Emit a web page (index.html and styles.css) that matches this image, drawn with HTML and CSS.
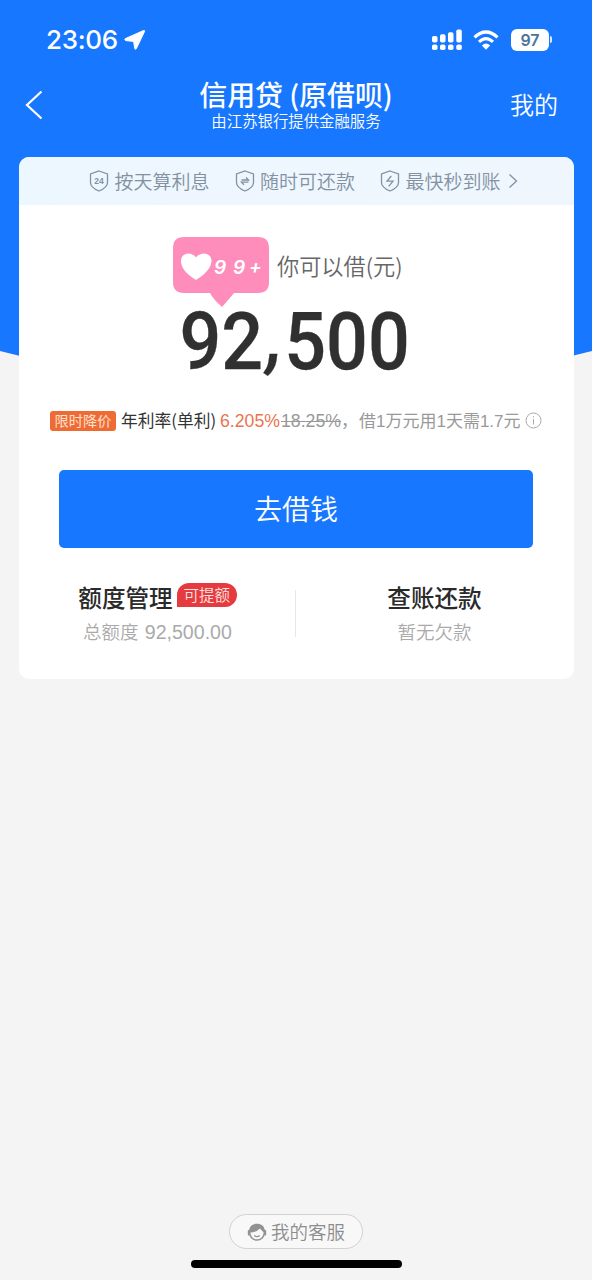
FILE: index.html
```html
<!DOCTYPE html>
<html lang="zh-CN">
<head>
<meta charset="utf-8">
<title>信用贷</title>
<link rel="stylesheet" href="styles.css">
</head>
<body>
<div class="page">
  <svg class="backdrop" width="592" height="380" viewBox="0 0 592 380"><path d="M0 0H592V351Q296 429 0 351Z" fill="#1777ff"/></svg>
  <header class="status">
    <span class="clock">23:06</span>
    <svg class="locate" width="22" height="22" viewBox="0 0 22 22"><path d="M19.600 1.500 1.200 9.700Q.2 11 1.700 11.600L9.600 12.400 10.800 19.700Q11.400 21 12.300 19.700L20.600 2.300Q20.700 1.100 19.600 1.500Z" fill="#fff" stroke="#fff"/></svg>
    <svg class="signal" width="32" height="24" viewBox="0 0 32 24" fill="#fff"><rect x="1" y="8" width="5.500" height="6.500" rx="1.800"/><rect x="9" y="6.300" width="5.500" height="8.200" rx="1.800"/><rect x="17" y="4.200" width="5.500" height="10.300" rx="1.800"/><rect x="25.300" y="1.500" width="5.500" height="13" rx="1.800"/><rect x="1" y="16.500" width="5.500" height="5.500" rx="1.800"/><rect x="9" y="16.500" width="5.500" height="5.500" rx="1.800"/><rect x="17" y="16.500" width="5.500" height="5.500" rx="1.800"/><rect x="25.300" y="16.500" width="5.500" height="5.500" rx="1.800"/></svg>
    <svg class="wifi" width="26" height="20" viewBox="0 0 26 20" fill="none" stroke="#fff" stroke-width="3.2"><path d="M1.500 7.300Q13-3.400 24.500 7.300"/><path d="M6 11.900Q13 5.300 20 11.900"/><path d="M8.900 15.400Q13 11.800 17.100 15.400L13 19.700Z" fill="#fff" stroke="none"/></svg>
    <span class="battery">97</span><span class="battery-tip"></span>
  </header>
  <nav class="nav">
    <svg class="back" width="20" height="30" viewBox="0 0 20 30"><path d="M17.500 1.500 3 15 17.500 28.500" fill="none" stroke="#fff" stroke-width="2.200"/></svg>
    <div class="heading"><h1 class="title">信用贷 (原借呗)</h1><p class="subtitle">由江苏银行提供金融服务</p></div>
    <a class="mine">我的</a>
  </nav>
  <main class="card">
    <div class="features">
      <span class="feature"><svg class="shield" width="20" height="22" viewBox="0 0 20 22"><path d="M10 1 18.500 4V12.500Q18.500 17.500 10 21Q1.500 17.500 1.500 12.500V4Z"/><text x="10" y="14" text-anchor="middle" class="shield-text">24</text></svg>按天算利息</span>
      <span class="feature"><svg class="shield" width="20" height="22" viewBox="0 0 20 22"><path d="M10 1 18.500 4V12.500Q18.500 17.500 10 21Q1.500 17.500 1.500 12.500V4Z"/><path d="M6.500 10H13.500L11 7.500M13.500 12.200H6.500L9 14.700"/></svg>随时可还款</span>
      <span class="feature"><svg class="shield" width="20" height="22" viewBox="0 0 20 22"><path d="M10 1 18.500 4V12.500Q18.500 17.500 10 21Q1.500 17.500 1.500 12.500V4Z"/><path d="M11.300 6 7 11.200H13L8.700 16.400"/></svg>最快秒到账<svg class="more" width="10" height="16" viewBox="0 0 10 16"><path d="M1.500 1.500 8.500 8 1.500 14.500"/></svg></span>
    </div>
    <div class="lead">
      <svg class="bubble" width="96" height="71" viewBox="0 0 96 71"><path d="M11 0H85Q96 0 96 11V45Q96 56 85 56H61Q57 61 49 70Q40 62 37 56H11Q0 56 0 45V11Q0 0 11 0Z" fill="#ff8dbb"/><path d="M23 43C13.500 37 8 31 8 24C8 15.500 18.500 14 23 20.500C28 14 38.500 15.500 38.500 24C38.500 31 31 38 23 43Z" fill="#fff"/><text class="bubble-text" x="41 60 76" y="37 37 36">99+</text></svg>
      <span class="lead-text">你可以借(元)</span>
    </div>
    <div class="amount"><span class="digits">92<span class="comma">,</span>500</span></div>
    <div class="rate">
      <span class="sale">限时降价</span><span class="rate-name">年利率(单利)</span><span class="rate-now">6.205%</span><s class="rate-old">18.25%</s><span class="rate-comma">，</span><span class="rate-note">借1万元用1天需1.7元</span>
      <svg class="info" width="17" height="17" viewBox="0 0 17 17"><circle cx="8.500" cy="8.500" r="7.500"/><path d="M8.500 4.200V5.600M8.500 7V12.500"/></svg>
    </div>
    <button class="borrow">去借钱</button>
    <div class="links">
      <section class="link"><div class="link-title">额度管理<span class="raise">可提额</span></div><div class="link-note">总额度 <span class="limit">92,500.00</span></div></section>
      <section class="link"><div class="link-title">查账还款</div><div class="link-note">暂无欠款</div></section>
    </div>
  </main>
  <footer class="footer">
    <a class="service"><svg class="agent" width="20" height="20" viewBox="0 0 20 20"><circle cx="10" cy="10.800" r="7.300" fill="none" stroke="#929292" stroke-width="1.500"/><path d="M2.300 10.500C1.500 3 8 .8 13 2.200Q18 3.500 17.800 10.500Q14.500 9 13 6.500Q9 10.500 2.300 10.500Z" fill="#929292"/><path d="M1.800 9V12.500M18.200 9V12.500" stroke="#929292" stroke-width="2" stroke-linecap="round"/><path d="M7.300 13.500Q10 15.800 12.700 13.500" fill="none" stroke="#929292" stroke-width="1.200"/></svg>我的客服</a>
    <div class="home-bar"></div>
  </footer>
</div>
</body>
</html>
```

FILE: styles.css
```css
* { box-sizing: border-box; }
body { margin: 0; font-family: "Liberation Sans", "Noto Sans CJK SC", sans-serif; background: #f4f4f4; }
svg { display: block; flex: none; }
.page { position: relative; width: 592px; height: 1280px; display: flex; flex-direction: column; white-space: nowrap; overflow: hidden; isolation: isolate; }
.backdrop { position: absolute; z-index: -1; top: 0; left: 0; }
.status { height: 78px; display: flex; align-items: center; padding: 1px 40px 0 46px; color: #fff; }
.clock { width: 72px; font: 500 26px/30px Inter, sans-serif; letter-spacing: -0.3px; }
.locate { margin-left: 6px; }
.signal { margin-left: auto; }
.wifi { margin-left: 10px; }
.battery { width: 38px; height: 22px; margin-left: 12px; border-radius: 6px; background: #fff; color: #49759c; font: 600 16px/22px Inter, sans-serif; text-align: center; }
.battery-tip { width: 2px; height: 7px; margin-left: 1px; border-radius: 0 2px 2px 0; background: #d5eaff; }
.nav { height: 79px; display: grid; grid-template-columns: 100px 1fr 100px; color: #fff; font-family: "Noto Sans CJK SC", sans-serif; }
.back { margin: 12px 0 0 24px; }
.heading { text-align: center; }
.title { margin: 0; font-size: 27.900px; line-height: 33px; font-weight: 500; }
.subtitle { margin: 0; font-size: 15.400px; line-height: 18px; font-weight: 350; }
.mine { justify-self: end; margin-right: 34px; font-size: 24px; line-height: 52px; font-weight: 350; }
.card { width: 555px; height: 522px; margin-left: 19px; border-radius: 10px; background: #fff; overflow: hidden; }
.features { height: 48px; display: flex; gap: 25px; padding: 0 0 1px 70px; background: linear-gradient(90deg, #edf7ff, #eff6fe); color: #8291a1; font: 350 19px/28px "Noto Sans CJK SC", sans-serif; }
.feature { display: flex; align-items: center; gap: 5.500px; }
.shield, .more { fill: none; stroke: #8291a1; stroke-width: 1.3; }
.shield-text { fill: #8291a1; stroke: none; font: bold 8.500px "Liberation Sans", sans-serif; }
.more { margin-left: 2px; }
.lead { height: 102px; display: flex; align-items: flex-start; padding: 32px 0 0 153.500px; }
.bubble-text { fill: #fff; font: italic 600 19px Inter, sans-serif; }
.lead-text { margin: 12px 0 0 8.500px; color: #666; font: 350 22.200px/32px "Noto Sans CJK SC", sans-serif; }
.amount { height: 70px; display: flex; justify-content: center; }
.digits { font: 500 80px/70px Roboto, sans-serif; color: #303030; transform: translateX(-1.500px) scaleX(.92); -webkit-text-stroke: .3px #303030; }
.comma { display: inline-block; padding: 0 1px 0 4px; transform: translateY(-6px) skewX(-8deg); }
.rate { height: 24px; margin: 32px 0 0 31px; display: flex; align-items: center; font-size: 17px; line-height: 24px; color: #999; }
.sale { width: 66px; height: 20px; border-radius: 3px; background: #ef6b36; color: #ffe0cb; font: 14.200px/18.500px "Noto Sans CJK SC", sans-serif; text-align: center; }
.rate-name { width: 104px; padding-left: 5px; color: #333; font: 16.800px/24px "Noto Sans CJK SC", sans-serif; margin-top: -3px; }
.rate-now { width: 61px; font-size: 17.700px; color: #e97550; }
.rate-old { width: 60px; font-size: 17.700px; }
.rate-comma { width: 18px; margin-top: 1px; }
.rate-note { width: 162px; margin-top: 1px; }
.info { margin: -2px 0 0 4px; fill: none; stroke: #aaa; stroke-width: 1; }
.borrow { display: block; width: 474px; height: 78px; margin: 37px 0 0 40px; padding: 0 0 2px; border: 0; border-radius: 5px; background: #1777ff; color: #fff; font: 350 28px/76px "Noto Sans CJK SC", sans-serif; }
.links { margin-top: 32px; display: flex; }
.link { width: 277px; height: 67px; text-align: center; }
.link + .link { position: relative; }
.link + .link::before { content: ""; position: absolute; left: -1px; top: 10px; width: 1px; height: 47px; background: #e8e8e8; }
.link-title { height: 34px; display: flex; justify-content: center; align-items: center; color: #2a2a2a; font: 500 23.600px/34px "Noto Sans CJK SC", sans-serif; }
.raise { width: 60px; height: 24px; margin: -4px 0 0 4px; border-radius: 12px 12px 12px 0; background: #e53b40; color: #ffe3df; font-size: 15.500px; font-weight: 350; line-height: 23px; }
.link-note { color: #aaa; font: 350 18.500px/34px "Noto Sans CJK SC", sans-serif; }
.limit { font: 19.600px/34px "Liberation Sans", sans-serif; margin-left: 2px; }
.footer { margin-top: auto; height: 66px; display: flex; flex-direction: column; align-items: center; }
.service { width: 134px; height: 35px; display: flex; align-items: center; justify-content: center; gap: 4px; border: 1px solid #d2d2d2; border-radius: 18px; background: #f8f8f8; color: #8d8d8d; font: 350 18.500px/33px "Noto Sans CJK SC", sans-serif; }
.home-bar { width: 211px; height: 8px; margin-top: 11px; border-radius: 4px; background: #000; }
```
